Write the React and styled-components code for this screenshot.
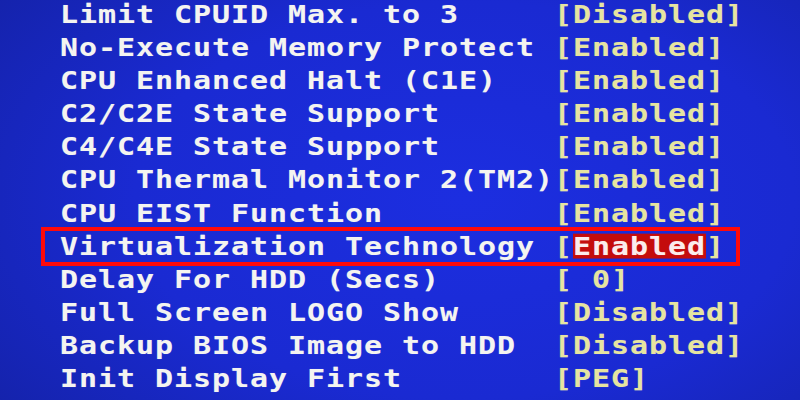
import React from 'react'
import styled, { createGlobalStyle } from 'styled-components'

const GlobalStyle = createGlobalStyle`
    html, body {
        margin: 0;
        padding: 0;
        background: #1624b8;
        overflow: hidden;
    }
`

const Screen = styled.div`
    width: 800px;
    height: 400px;
    overflow: hidden;
    padding-left: 44px;
    box-sizing: border-box;
    background: radial-gradient(ellipse 75% 90% at 58% 50%, #1c2ee0 0%, #1a2ad2 55%, #1422a8 100%);
    font-family: "DejaVu Sans Mono", "Liberation Mono", monospace;
    font-weight: bold;
    font-size: 30px;
    letter-spacing: 0.94px;
    text-shadow: 0 0 1px rgba(255, 255, 255, 0.3);
`

const List = styled.div`
    margin-top: -2px;
    display: flex;
    flex-direction: column;
`

const Row = styled.div`
    display: grid;
    grid-template-columns: 494px 1fr;
    width: 693px;
    height: 33.1px;
    line-height: 33.1px;
    padding-left: 16px;
    box-sizing: border-box;
    white-space: pre;
    outline: ${p => (p.$marked ? '4.5px solid #ff0a0a' : 'none')};
    outline-offset: -1.8px;
`

// the BIOS font is squat and wide: squeeze the glyphs vertically
const Label = styled.span`
    display: inline-block;
    transform: scaleY(0.83);
    color: #f4f4f0;
`

const Value = styled.span`
    display: inline-block;
    transform: scaleY(0.83);
    color: #e6e4a0;
`

const Selected = styled.span`
    color: #fbecec;
    background: linear-gradient(#c40c0c, #c40c0c) 0 1.5px / 100% 30px no-repeat;
`

const items = [
    ['Limit CPUID Max. to 3', 'Disabled'],
    ['No-Execute Memory Protect', 'Enabled'],
    ['CPU Enhanced Halt (C1E)', 'Enabled'],
    ['C2/C2E State Support', 'Enabled'],
    ['C4/C4E State Support', 'Enabled'],
    ['CPU Thermal Monitor 2(TM2)', 'Enabled'],
    ['CPU EIST Function', 'Enabled'],
    ['Virtualization Technology', 'Enabled', true],
    ['Delay For HDD (Secs)', ' 0'],
    ['Full Screen LOGO Show', 'Disabled'],
    ['Backup BIOS Image to HDD', 'Disabled'],
    ['Init Display First', 'PEG'],
]

export default function App() {
    return (
        <Screen>
            <GlobalStyle />
            <List>
                {items.map(([label, value, marked]) => (
                    <Row key={label} $marked={marked}>
                        <Label>{label}</Label>
                        <Value>
                            [{marked ? <Selected>{value}</Selected> : value}]
                        </Value>
                    </Row>
                ))}
            </List>
        </Screen>
    )
}
